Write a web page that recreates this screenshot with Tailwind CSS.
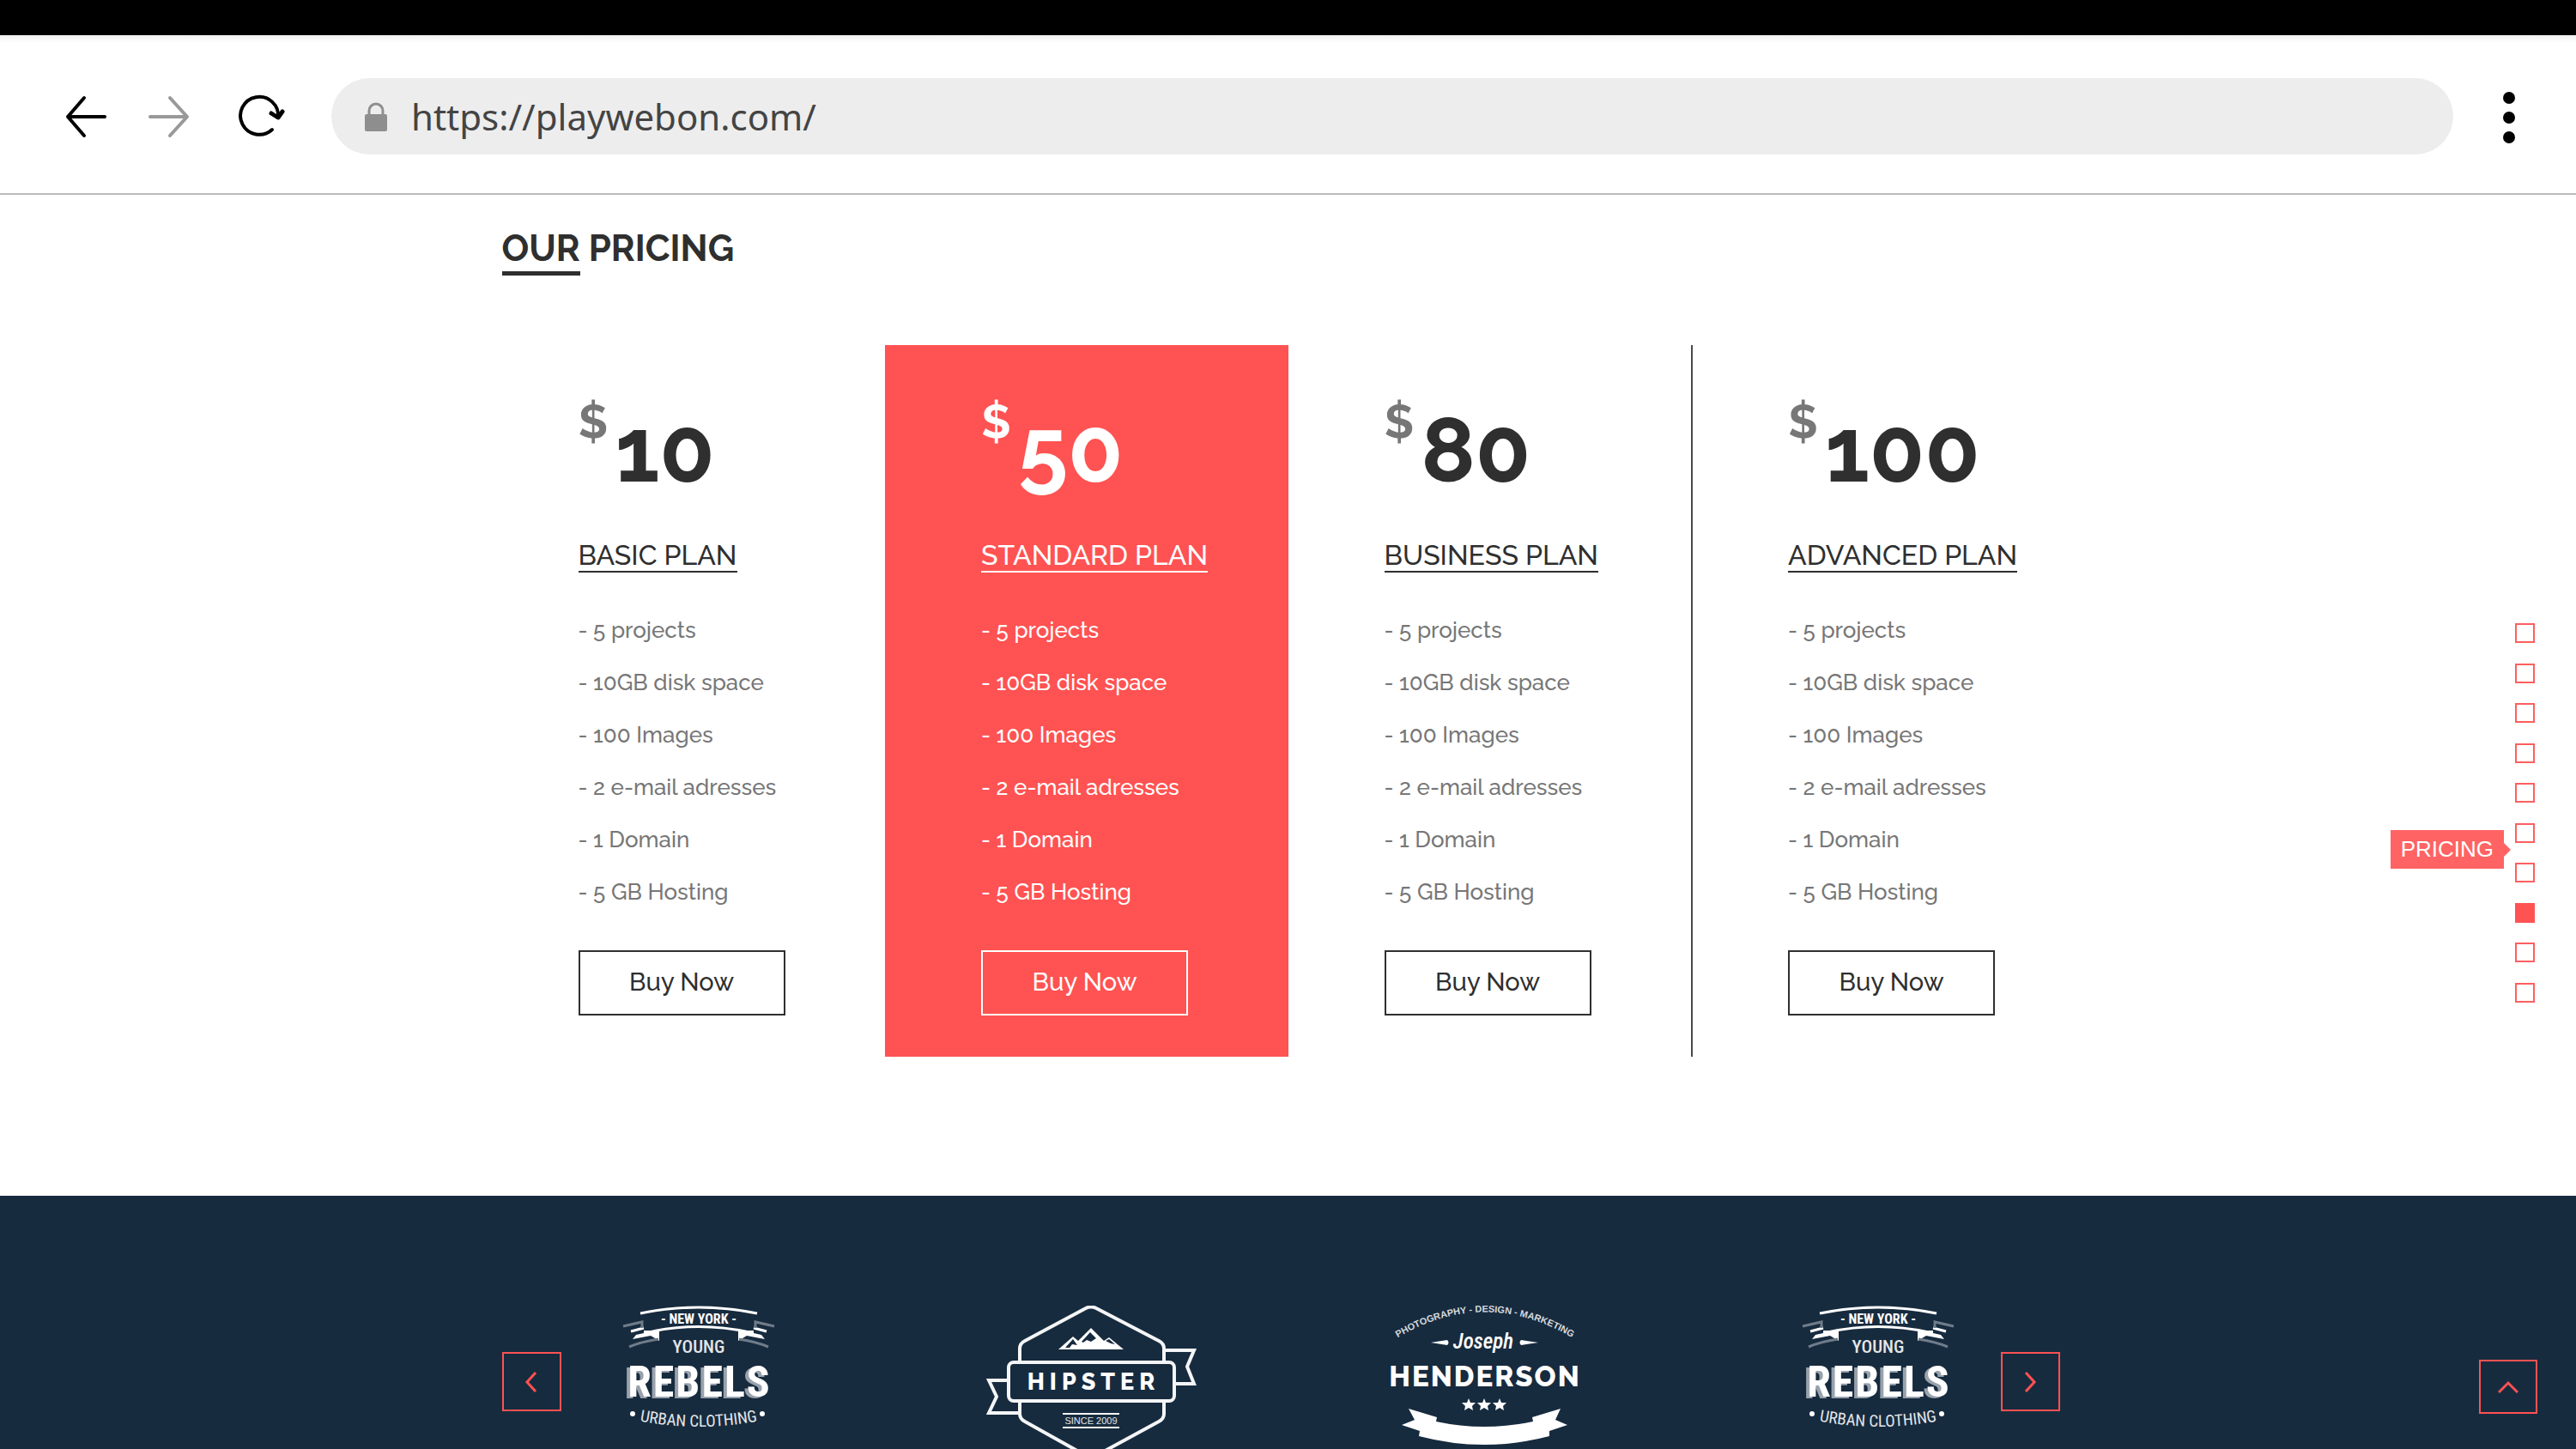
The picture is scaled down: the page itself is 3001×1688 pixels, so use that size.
<!DOCTYPE html>
<html lang="en">
<head>
  <meta charset="UTF-8" />
  <meta name="viewport" content="width=device-width, initial-scale=1.0"/>
  <title>Our Pricing</title>
  <script src="https://cdn.jsdelivr.net/npm/@tailwindcss/browser@4"></script>
</head>
<body class="relative min-h-screen flex flex-col bg-white text-[#2f2f2f] font-[Raleway,Lato,sans-serif]">
  <!-- Status bar -->
  <div class="h-[41px] bg-black"></div>

  <!-- Browser bar -->
  <header class="flex items-center h-[186px] pt-[5px] pl-[70px] pr-[66px] bg-linear-to-b from-[#f1f1f1] via-white via-5% to-white border-b-2 border-[#bbbbbb]">
    <button type="button" aria-label="Back" class="w-[60px]">
      <svg class="w-[60px] h-[60px]" viewBox="0 0 60 60" fill="none" stroke="#000" stroke-width="4" stroke-linecap="round" stroke-linejoin="round"><path d="M28 8 L9 30 L28 52 M9 30 H52"/></svg>
    </button>
    <button type="button" aria-label="Forward" class="w-[60px] ml-[36px]">
      <svg class="w-[60px] h-[60px]" viewBox="0 0 60 60" fill="none" stroke="#999" stroke-width="4" stroke-linecap="round" stroke-linejoin="round"><path d="M32 8 L52 30 L32 52 M52 30 H9"/></svg>
    </button>
    <button type="button" aria-label="Reload" class="w-[60px] ml-[48px]">
      <svg class="w-[60px] h-[60px]" viewBox="0 0 60 60" fill="none" stroke="#000" stroke-width="4" stroke-linecap="round" stroke-linejoin="round"><path d="M43 45 A22 22 0 1 1 50 31"/><path d="M42 26 L50 31 L55 24" stroke-width="5"/></svg>
    </button>
    <div class="flex-1 flex items-center h-[89px] ml-[52px] pl-[39px] pr-10 rounded-full bg-[#ededed]">
      <svg class="w-[26px] h-[34px]" viewBox="0 0 26 34" fill="none"><rect x="0" y="14" width="26" height="20" rx="2" fill="#8e8e8e"/><path d="M5 16 V10 A8 8 0 0 1 21 10 V16" stroke="#8e8e8e" stroke-width="3"/></svg>
      <input type="text" aria-label="Address" value="https://playwebon.com/" class="flex-1 ml-[28px] text-[42px] text-[#444444] font-['Noto_Sans','Open_Sans',sans-serif] outline-none" />
    </div>
    <button type="button" aria-label="Menu" class="ml-[53px]">
      <svg class="w-[24px] h-[64px]" viewBox="0 0 24 64" fill="#000"><circle cx="12" cy="10" r="7"/><circle cx="12" cy="33" r="7"/><circle cx="12" cy="56" r="7"/></svg>
    </button>
  </header>

  <!-- Pricing -->
  <section class="w-full max-w-[1878px] mx-auto pt-[37px] pb-[162px]">
    <h2 class="flex gap-[10px] px-[23px] text-[42px] leading-[52px] font-bold"><span class="border-b-[5px] border-[#2f2f2f]">OUR</span> PRICING</h2>

    <div class="grid grid-cols-4 mt-[81px]">
      <div class="flex flex-col items-start h-[829px] pl-[112px]">
        <p class="flex items-start gap-[8px] h-[226px] pt-[52px] font-bold"><span class="text-[55px] leading-[73px] text-[#777777]">$</span><span class="text-[105px] leading-[140px]">10</span></p>
        <h3 class="text-[32px] leading-[37px] font-medium border-b-2 border-[#2f2f2f]">BASIC PLAN</h3>
        <ul class="mt-[37px] text-[26px] leading-[61px] font-medium text-[#777777]">
          <li>- 5 projects</li>
          <li>- 10GB disk space</li>
          <li>- 100 Images</li>
          <li>- 2 e-mail adresses</li>
          <li>- 1 Domain</li>
          <li>- 5 GB Hosting</li>
        </ul>
        <button type="button" class="w-[241px] h-[76px] mt-[37px] border-2 border-[#2f2f2f] text-[29px] font-medium">Buy Now</button>
      </div>
      <div class="flex flex-col items-start h-[829px] pl-[112px] bg-[#ff5252] text-white">
        <p class="flex items-start gap-[8px] h-[226px] pt-[52px] font-bold"><span class="text-[55px] leading-[73px]">$</span><span class="text-[105px] leading-[140px]">50</span></p>
        <h3 class="text-[32px] leading-[37px] font-medium border-b-2 border-white">STANDARD PLAN</h3>
        <ul class="mt-[37px] text-[26px] leading-[61px] font-medium">
          <li>- 5 projects</li>
          <li>- 10GB disk space</li>
          <li>- 100 Images</li>
          <li>- 2 e-mail adresses</li>
          <li>- 1 Domain</li>
          <li>- 5 GB Hosting</li>
        </ul>
        <button type="button" class="w-[241px] h-[76px] mt-[37px] border-2 border-white text-[29px] font-medium">Buy Now</button>
      </div>
      <div class="flex flex-col items-start h-[829px] pl-[112px]">
        <p class="flex items-start gap-[8px] h-[226px] pt-[52px] font-bold"><span class="text-[55px] leading-[73px] text-[#777777]">$</span><span class="text-[105px] leading-[140px]">80</span></p>
        <h3 class="text-[32px] leading-[37px] font-medium border-b-2 border-[#2f2f2f]">BUSINESS PLAN</h3>
        <ul class="mt-[37px] text-[26px] leading-[61px] font-medium text-[#777777]">
          <li>- 5 projects</li>
          <li>- 10GB disk space</li>
          <li>- 100 Images</li>
          <li>- 2 e-mail adresses</li>
          <li>- 1 Domain</li>
          <li>- 5 GB Hosting</li>
        </ul>
        <button type="button" class="w-[241px] h-[76px] mt-[37px] border-2 border-[#2f2f2f] text-[29px] font-medium">Buy Now</button>
      </div>
      <div class="flex flex-col items-start h-[829px] pl-[111px] border-l-2 border-[#4a4a4a]">
        <p class="flex items-start gap-[8px] h-[226px] pt-[52px] font-bold"><span class="text-[55px] leading-[73px] text-[#777777]">$</span><span class="text-[105px] leading-[140px]">100</span></p>
        <h3 class="text-[32px] leading-[37px] font-medium border-b-2 border-[#2f2f2f]">ADVANCED PLAN</h3>
        <ul class="mt-[37px] text-[26px] leading-[61px] font-medium text-[#777777]">
          <li>- 5 projects</li>
          <li>- 10GB disk space</li>
          <li>- 100 Images</li>
          <li>- 2 e-mail adresses</li>
          <li>- 1 Domain</li>
          <li>- 5 GB Hosting</li>
        </ul>
        <button type="button" class="w-[241px] h-[76px] mt-[37px] border-2 border-[#2f2f2f] text-[29px] font-medium">Buy Now</button>
      </div>
    </div>
  </section>

  <!-- Clients -->
  <section class="flex-1 bg-[#172b3f]">
    <div class="relative w-full max-w-[1832px] mx-auto pt-[128px]">
      <div class="grid grid-cols-4 justify-items-center">
        <svg class="w-[178px] h-[146px]" viewBox="0 0 178 146" fill="#fff">
          <symbol id="rebels" viewBox="0 0 178 146">
            <path d="M21 9 Q89 -5 157 9" fill="none" stroke="#fff" stroke-width="3"/>
            <path d="M30 31 Q89 18 148 31" fill="none" stroke="#fff" stroke-width="3"/>
            <path d="M25 29 L43 29 L43 41 L33 35 L12 39 L16 34 L25 32 Z M153 29 L135 29 L135 41 L145 35 L166 39 L162 34 L153 32 Z"/>
            <path d="M10 30 L25 26 M168 30 L153 26" stroke="#fff" stroke-width="3"/>
            <path d="M1 24 L23 19 V26 M177 24 L155 19 V26 M8 48 Q22 42 42 39 M170 48 Q156 42 136 39" fill="none" stroke="#6f7c89" stroke-width="3"/>
            <text x="89" y="21" text-anchor="middle" class="text-[16px] font-bold font-['Roboto_Condensed','Open_Sans',sans-serif]">- NEW YORK -</text>
            <text x="89" y="55" text-anchor="middle" class="text-[21px] fill-[#e3e6e8] font-medium font-['Roboto_Condensed','Open_Sans',sans-serif]">YOUNG</text>
            <text x="90" y="106" text-anchor="middle" class="text-[50px] font-bold tracking-[2px] drop-shadow-[-4px_2px_0_#99a2ac] font-['Roboto_Condensed','Open_Sans',sans-serif]">REBELS</text>
            <path id="rebels-arc" d="M4 131 Q89 151 174 131" fill="none"/>
            <circle cx="12" cy="126" r="3"/>
            <circle cx="163" cy="126" r="3"/>
            <text text-anchor="middle" class="text-[19px] fill-[#e3e6e8] font-['Roboto_Condensed','Open_Sans',sans-serif]"><textPath href="#rebels-arc" startOffset="50%">URBAN CLOTHING</textPath></text>
          </symbol>
          <use href="#rebels"/>
        </svg>

        <svg class="w-[246px] h-[167px]" viewBox="0 0 246 167" fill="none" stroke="#f4f5f6" stroke-width="4">
          <path d="M39 65 V50 Q39 44 45 41 L116 3 Q122 0 128 3 L201 41 Q207 44 207 50 V65"/>
          <path d="M39 112 V126 Q39 132 45 135 L122 178 L201 135 Q207 132 207 126 V112"/>
          <rect x="26" y="66" width="193" height="45" rx="6"/>
          <path d="M207 52 H242 L234 71 L242 91 H220"/>
          <path d="M26 87 H3 L12 106 L3 125 H39"/>
          <path d="M89 126 H155 M89 142 H155" stroke-width="2"/>
          <path d="M84 51 L101 36 L107 41 L122 26 L137 41 L143 37 L160 51 Z" fill="#fff" stroke="none"/>
          <path d="M92 49 L101 39 L106 46 L100 45 L97 49 Z M111 42 L121 31 L128 38 L122 42 L117 40 L113 43 Z M139 41 L143 39 L150 45 L145 44 Z" fill="#172b3f" stroke="none"/>
          <text x="125" y="98" text-anchor="middle" fill="#fff" stroke="none" class="text-[27px] font-extrabold tracking-[6px] font-[Raleway,Lato,sans-serif]">HIPSTER</text>
          <text x="122" y="138" text-anchor="middle" fill="#e3e6e8" stroke="none" class="text-[11px] font-['Liberation_Sans',sans-serif]">SINCE 2009</text>
        </svg>

        <svg class="w-[224px] h-[162px]" viewBox="0 0 224 162" fill="#fff">
          <path id="henderson-arc" d="M9 38 Q111 -23 215 38" fill="none"/>
          <text text-anchor="middle" class="text-[11px] fill-[#d5d9dd] font-bold font-['Liberation_Sans',sans-serif]"><textPath href="#henderson-arc" startOffset="50%">PHOTOGRAPHY - DESIGN - MARKETING</textPath></text>
          <path d="M49 43 L68 40 Q71 43 68 46 Z M174 43 L154 40 Q151 43 154 46 Z"/>
          <text x="110" y="50" text-anchor="middle" class="text-[25px] italic font-medium font-['Roboto_Condensed','Open_Sans',sans-serif]">Joseph</text>
          <text x="112" y="94" text-anchor="middle" class="text-[33px] font-extrabold tracking-[2px] font-[Raleway,Lato,sans-serif]">HENDERSON</text>
          <path d="M93 108 l2 5 6 0 -4 4 1 5 -5 -3 -5 3 1 -5 -4 -4 6 0 Z M111 108 l2 5 6 0 -4 4 1 5 -5 -3 -5 3 1 -5 -4 -4 6 0 Z M129 108 l2 5 6 0 -4 4 1 5 -5 -3 -5 3 1 -5 -4 -4 6 0 Z"/>
          <path d="M23 120 L56 130 L55 135 Q111 147 168 135 L167 130 L200 120 L194 133 L208 139 L187 146 L187 152 Q111 172 35 152 L36 146 L15 139 L30 133 Z"/>
        </svg>

        <svg class="w-[178px] h-[146px]" viewBox="0 0 178 146" fill="#fff"><use href="#rebels"/></svg>
      </div>

      <button type="button" aria-label="Previous" class="absolute left-0 top-[182px] flex items-center justify-center w-[69px] h-[69px] border-2 border-[#ff5252]">
        <svg class="w-[16px] h-[24px]" viewBox="0 0 16 24" fill="none" stroke="#ff5252" stroke-width="3"><path d="M13 1 L3 12 L13 23"/></svg>
      </button>
      <button type="button" aria-label="Next" class="absolute right-[17px] top-[182px] flex items-center justify-center w-[69px] h-[69px] border-2 border-[#ff5252]">
        <svg class="w-[16px] h-[24px]" viewBox="0 0 16 24" fill="none" stroke="#ff5252" stroke-width="3"><path d="M3 1 L13 12 L3 23"/></svg>
      </button>
    </div>
  </section>

  <!-- Section dots -->
  <nav aria-label="Sections" class="fixed right-[48px] top-[726px] flex flex-col justify-between h-[442px]">
    <a href="#" aria-label="Home" class="size-[23px] border-2 border-[#ff5f5f]"></a>
    <a href="#" aria-label="About" class="size-[23px] border-2 border-[#ff5f5f]"></a>
    <a href="#" aria-label="Services" class="size-[23px] border-2 border-[#ff5f5f]"></a>
    <a href="#" aria-label="Team" class="size-[23px] border-2 border-[#ff5f5f]"></a>
    <a href="#" aria-label="Skills" class="size-[23px] border-2 border-[#ff5f5f]"></a>
    <a href="#" aria-label="Portfolio" class="size-[23px] border-2 border-[#ff5f5f]"></a>
    <a href="#" aria-label="Reviews" class="size-[23px] border-2 border-[#ff5f5f]"></a>
    <a href="#" aria-label="Pricing" class="size-[23px] bg-[#ff5252]"></a>
    <a href="#" aria-label="Clients" class="size-[23px] border-2 border-[#ff5f5f]"></a>
    <a href="#" aria-label="Contact" class="size-[23px] border-2 border-[#ff5f5f]"></a>
    <div class="absolute right-[28px] top-[241px] flex items-center">
      <span class="px-[12px] bg-[#ff6363] text-white text-[26px] leading-[45px] font-['Liberation_Sans',Arial,sans-serif]">PRICING</span>
      <svg class="w-[8px] h-[16px]" viewBox="0 0 8 16" fill="#ff6363"><path d="M0 0 L8 8 L0 16 Z"/></svg>
    </div>
  </nav>

  <!-- Back to top -->
  <a href="#" aria-label="Back to top" class="fixed right-[45px] bottom-[41px] flex items-center justify-center w-[68px] h-[63px] border-2 border-[#ff5252]">
    <svg class="w-[24px] h-[16px]" viewBox="0 0 24 16" fill="none" stroke="#ff5252" stroke-width="3"><path d="M1 14 L12 3 L23 14"/></svg>
  </a>
</body>
</html>
